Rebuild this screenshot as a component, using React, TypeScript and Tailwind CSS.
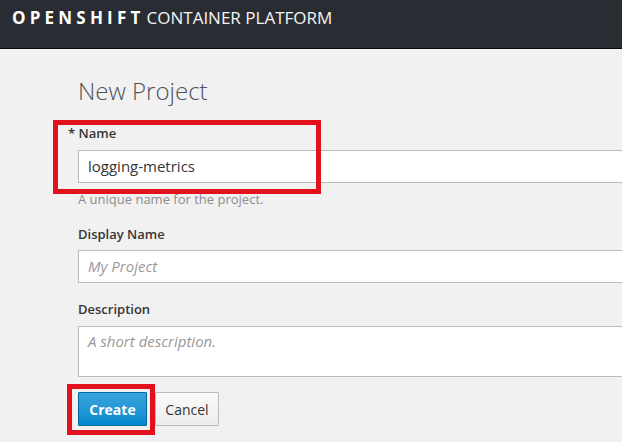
import React from 'react';

export default function App() {
  return (
    <div className="relative w-[622px] h-[442px] overflow-hidden bg-[#f1f1f1] font-['Open_Sans',sans-serif]">
      {/* Top bar */}
      <div className="h-[49px] bg-[#292d33] border-b border-[#0b0b0b] px-[12px] pt-[6px] flex items-start">
        <span className="text-[17px] leading-[24px] text-white font-bold tracking-[4.2px]">OPENSHIFT</span>
        <span className="text-[17px] leading-[24px] text-[#f4f4f4] font-normal ml-[2px]">CONTAINER PLATFORM</span>
      </div>

      {/* Form */}
      <div className="pl-[78px] w-[700px]">
        <h1 className="mt-[26px] text-[24px] leading-[32px] font-light text-[#4d5258]">New Project</h1>

        <label className="block mt-[17px] mb-[8px] ml-[-10px] text-[13px] leading-[18px] font-semibold text-[#363636]">
          * Name
        </label>
        <div className="h-[33px] bg-white border border-[#bbbbbb] pl-[9px] flex items-center text-[15px] text-[#363636]">
          logging-metrics
        </div>
        <p className="mt-[7px] text-[13px] leading-[18px] text-[#8b8d8f]">A unique name for the project.</p>

        <label className="block mt-[17px] mb-[7px] text-[13px] leading-[18px] font-semibold text-[#363636]">
          Display Name
        </label>
        <div className="h-[33px] bg-white border border-[#bbbbbb] pl-[9px] flex items-center text-[15px] italic text-[#999999]">
          My Project
        </div>

        <label className="block mt-[17px] mb-[8px] text-[13px] leading-[18px] font-semibold text-[#363636]">
          Description
        </label>
        <div className="h-[51px] bg-white border border-[#bbbbbb] pl-[9px] pt-[4px] text-[15px] leading-[20px] italic text-[#999999]">
          A short description.
        </div>

        <div className="mt-[15px] flex gap-[8px]">
          <button className="w-[69px] h-[34px] rounded-[1px] border border-[#00659c] bg-gradient-to-b from-[#39a5dc] to-[#0088ce] text-white text-[14px] font-bold">
            Create
          </button>
          <button className="w-[64px] h-[34px] rounded-[1px] border border-[#bbbbbb] bg-gradient-to-b from-[#fafafa] to-[#ededed] text-[#363636] text-[14px]">
            Cancel
          </button>
        </div>
      </div>

      {/* Annotation boxes */}
      <div className="absolute left-[53px] top-[120px] w-[268px] h-[74px] border-[5px] border-[#e3111d]" />
      <div className="absolute left-[67px] top-[384px] w-[88px] h-[51px] border-[5px] border-[#e3111d]" />
    </div>
  );
}
